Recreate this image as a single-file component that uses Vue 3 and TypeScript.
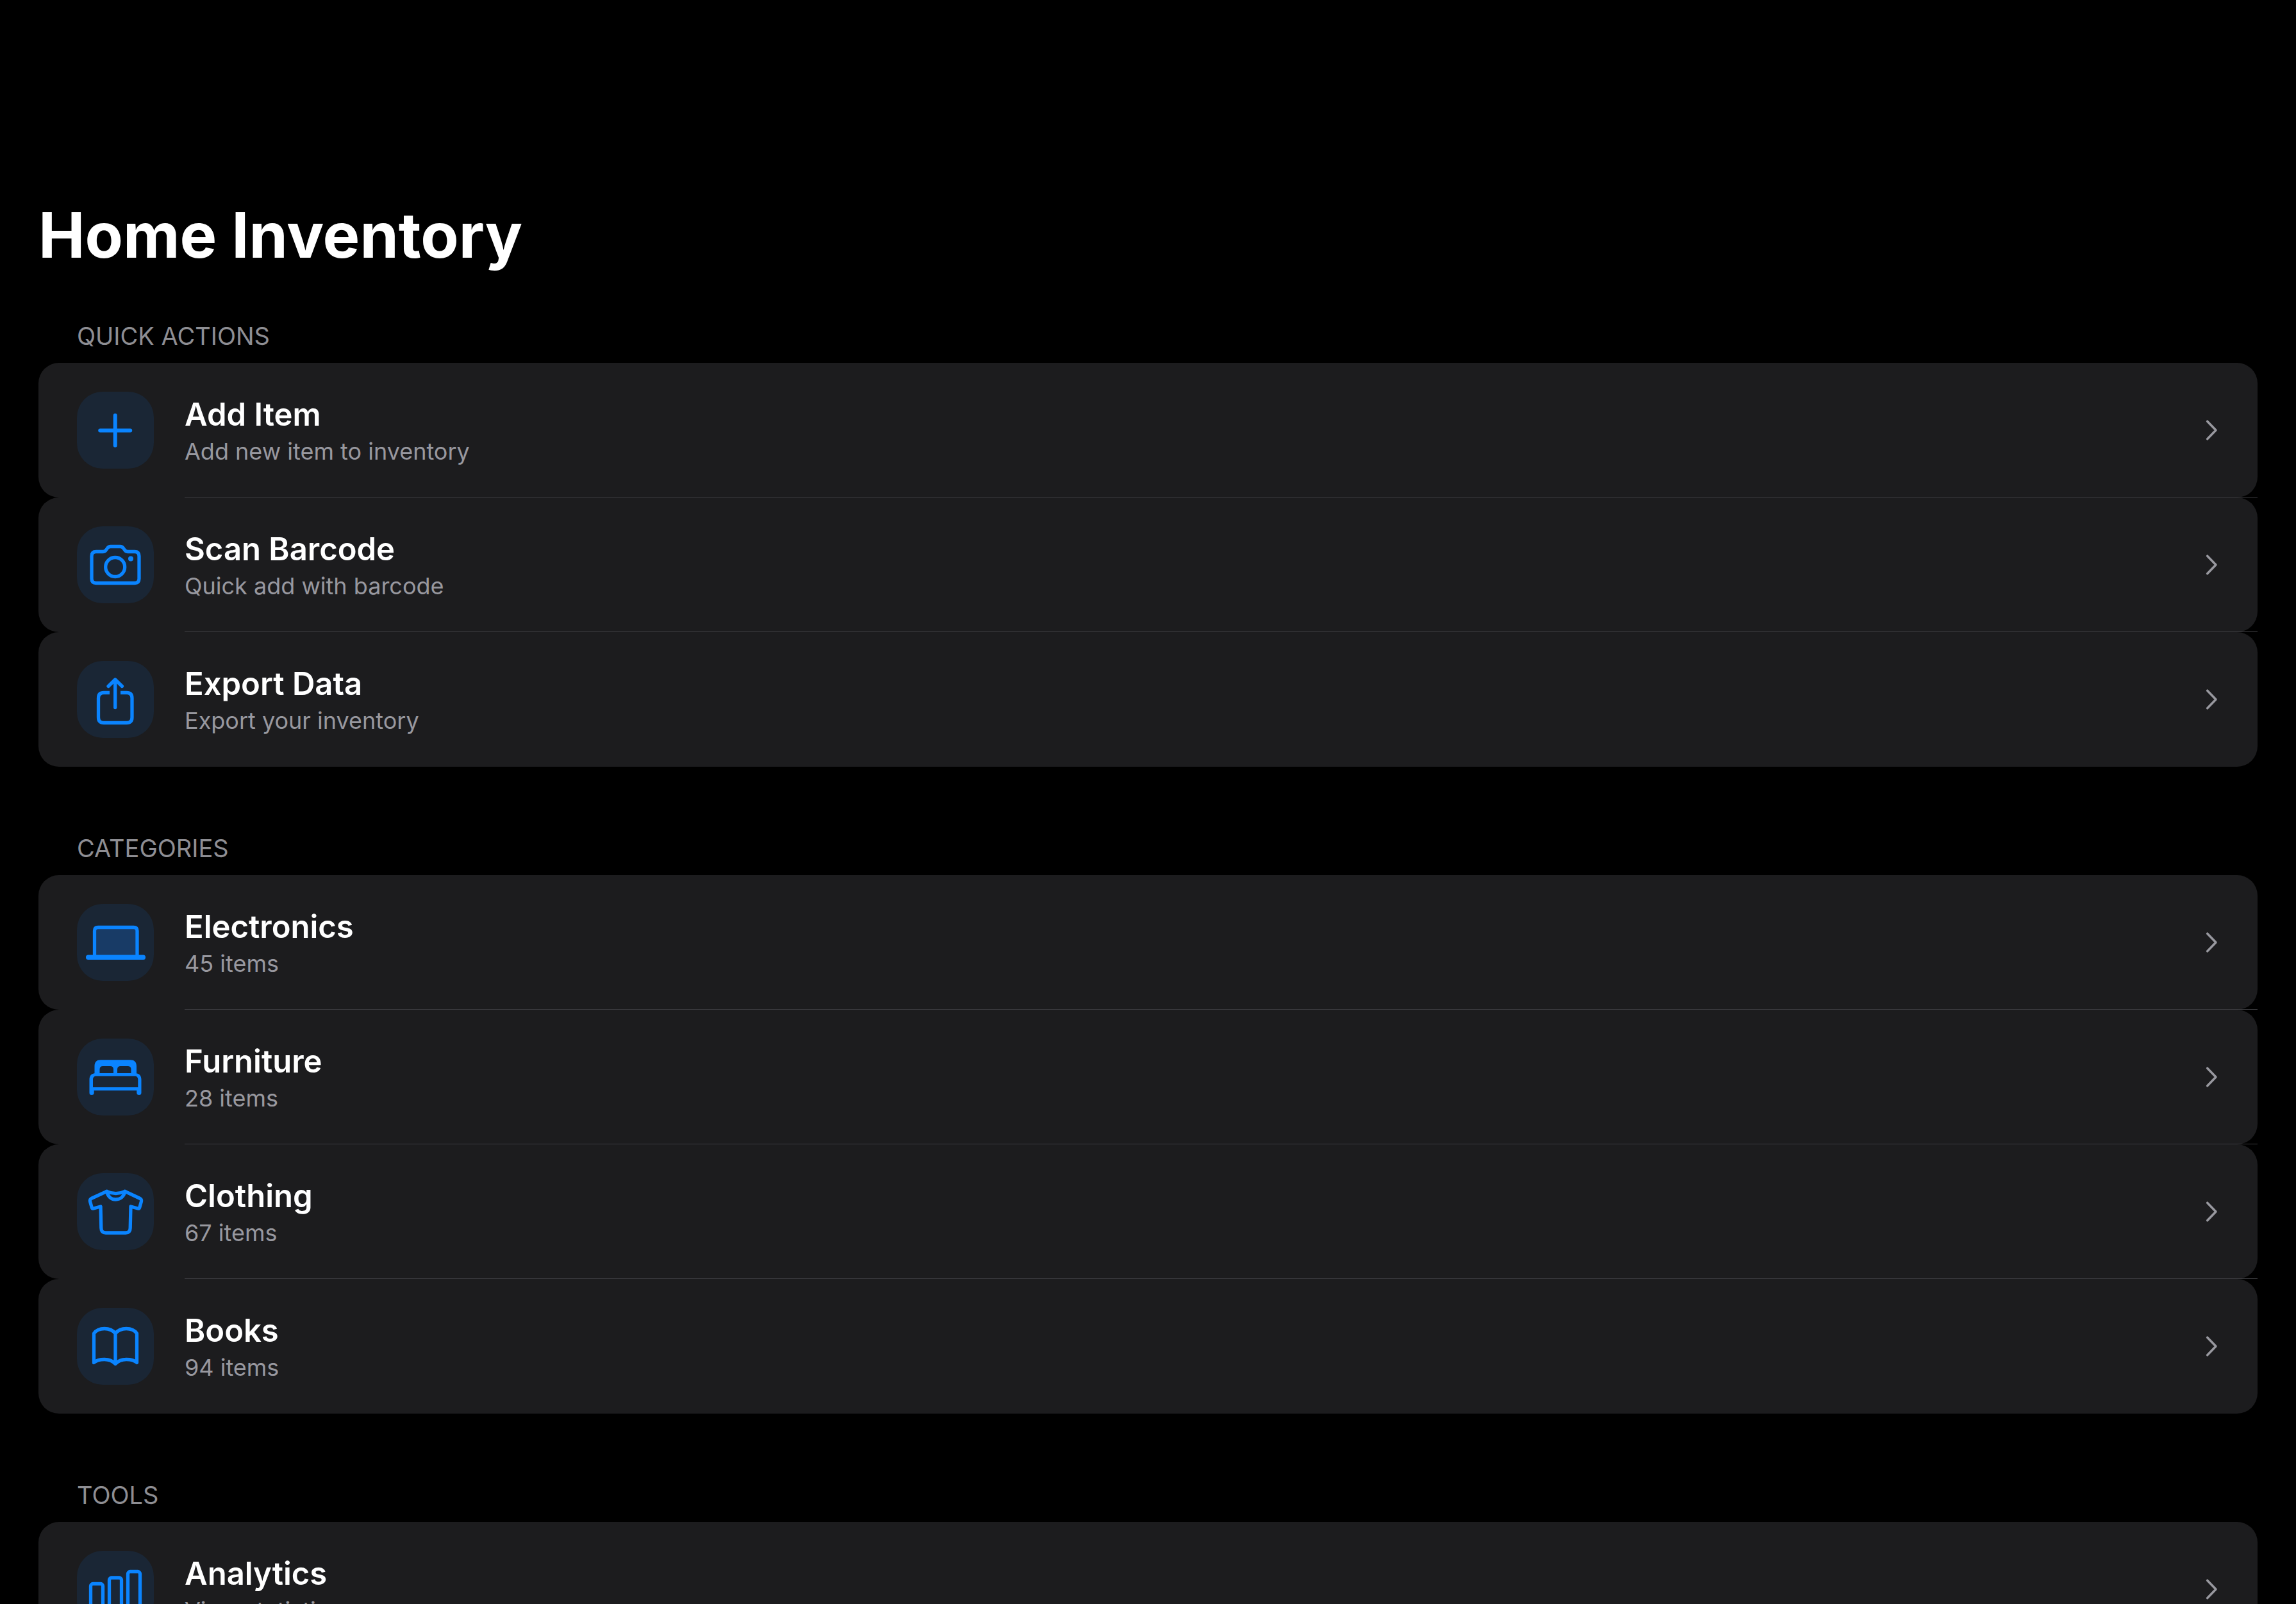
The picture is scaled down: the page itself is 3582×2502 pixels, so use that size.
<script setup lang="ts">
type IconName = 'plus' | 'camera' | 'share' | 'laptop' | 'bed' | 'shirt' | 'book' | 'chart'

interface Row {
  title: string
  subtitle: string
  icon: IconName
}

interface Section {
  id: string
  heading: string
  rows: Row[]
}

const sections: Section[] = [
  {
    id: 'quick-actions',
    heading: 'QUICK ACTIONS',
    rows: [
      { title: 'Add Item', subtitle: 'Add new item to inventory', icon: 'plus' },
      { title: 'Scan Barcode', subtitle: 'Quick add with barcode', icon: 'camera' },
      { title: 'Export Data', subtitle: 'Export your inventory', icon: 'share' },
    ],
  },
  {
    id: 'categories',
    heading: 'CATEGORIES',
    rows: [
      { title: 'Electronics', subtitle: '45 items', icon: 'laptop' },
      { title: 'Furniture', subtitle: '28 items', icon: 'bed' },
      { title: 'Clothing', subtitle: '67 items', icon: 'shirt' },
      { title: 'Books', subtitle: '94 items', icon: 'book' },
    ],
  },
  {
    id: 'tools',
    heading: 'TOOLS',
    rows: [{ title: 'Analytics', subtitle: 'View statistics', icon: 'chart' }],
  },
]
</script>

<template>
  <main class="page">
    <h1 class="page-title">Home Inventory</h1>

    <section v-for="section in sections" :key="section.id" class="section" :aria-labelledby="section.id">
      <h2 :id="section.id" class="section-heading">{{ section.heading }}</h2>
      <ul class="list">
        <li v-for="row in section.rows" :key="row.title" class="item">
          <button type="button" class="row">
            <span class="tile">
              <svg class="glyph" viewBox="0 0 120 120" aria-hidden="true">
                <g v-if="row.icon === 'plus'" class="heavy">
                  <path d="M59.700 37V83.700M36.200 60.400H83.200" />
                </g>
                <g v-else-if="row.icon === 'camera'">
                  <path d="M30 39.500H40.500C42.500 39.500 43.800 39 45 37.500L48 33.500C49.200 32 50.500 31.500 52.500 31.500H67.500C69.500 31.500 70.800 32 72 33.500L75 37.500C76.200 39 77.500 39.500 79.500 39.500H90C94.700 39.500 97 41.800 97 46.500V81.500C97 86.200 94.700 88.500 90 88.500H30C25.300 88.500 23 86.200 23 81.500V46.500C23 41.800 25.300 39.500 30 39.500Z" />
                  <circle cx="59.700" cy="63.500" r="15" />
                  <circle class="solid" cx="84" cy="50.500" r="4" />
                </g>
                <g v-else-if="row.icon === 'share'">
                  <path stroke-linecap="butt" d="M51 49.500H42C36.500 49.500 33.500 52.500 33.500 58V88C33.500 93.500 36.500 96.500 42 96.500H77.500C83 96.500 86 93.500 86 88V58C86 52.500 83 49.500 77.500 49.500H68" />
                  <path d="M59.700 30V72.500M49 39.500L59.700 29L70.500 39.500" />
                </g>
                <g v-else-if="row.icon === 'laptop'">
                  <path class="tint" d="M27.500 80V42C27.500 38.500 29.500 36.500 33 36.500H88.500C92 36.500 94 38.500 94 42V80Z" />
                  <path d="M27.500 80V42C27.500 38.500 29.500 36.500 33 36.500H88.500C92 36.500 94 38.500 94 42V80" />
                  <rect class="solid" x="14" y="79.500" width="93" height="7.500" rx="3.500" />
                </g>
                <g v-else-if="row.icon === 'bed'">
                  <path
                    class="solid"
                    fill-rule="evenodd"
                    d="M27.500 56V43C27.500 36.500 31 33.300 37 33.300H83C89.500 33.300 93 36.500 93 43V56H84.500V48C84.500 44.800 82.500 43 79.500 43H68C65 43 63 44.800 63 48V56H57V48C57 44.800 55 43 52 43H40.500C37.500 43 35.500 44.800 35.500 48V56Z"
                  />
                  <path
                    class="solid"
                    fill-rule="evenodd"
                    d="M29.500 54H90.500C97 54 100.500 57.500 100.500 64V84.500C100.500 87 99.300 88 97 88S93.300 87 93.300 84.500V81H26.700V84.500C26.700 87 25.500 88 23 88S19.500 87 19.500 84.500V64C19.500 57.500 23 54 29.500 54ZM30.500 58.500C27 58.500 25 60.500 25 64V76H95.300V64C95.300 60.500 93.300 58.500 90 58.500Z"
                  />
                </g>
                <g v-else-if="row.icon === 'shirt'">
                  <path d="M46.500 28.300L23.500 39C20.800 40.300 20 41.500 20.500 44L23.200 53.500C23.700 55.200 24.500 55.500 26 55L37 52L37.800 85.500C37.900 90.500 40.200 93 45 93H76C80.800 93 83.100 90.500 83.200 85.500L84 52L95 55C96.500 55.500 97.300 55.200 97.800 53.500L100.500 44C101 41.500 100.200 40.300 97.500 39L75 28.300C66 32.500 55.500 32.500 46.500 28.300Z" />
                  <path d="M46.500 28.300C48 36 53 41 60.500 41S73.500 36 75 28.300" />
                </g>
                <g v-else-if="row.icon === 'book'">
                  <path d="M60 40C56 35 50 32.500 43 32.500S30 35 26.500 40V85.500C30 82 36 80.500 43 80.500S56 83 60 87.500C64 83 70 80.500 77 80.500S90 82 93.500 85.500V40C90 35 84 32.500 77 32.500S64 35 60 40V86" />
                </g>
                <g v-else>
                  <rect x="21.500" y="51.500" width="19" height="38" rx="3.500" />
                  <rect x="50.500" y="42" width="19" height="47.500" rx="3.500" />
                  <rect x="79.500" y="32.500" width="19" height="57" rx="3.500" />
                </g>
              </svg>
            </span>
            <span class="copy">
              <span class="title">{{ row.title }}</span>
              <span class="subtitle">{{ row.subtitle }}</span>
            </span>
            <svg class="chevron" viewBox="0 0 22 36" aria-hidden="true">
              <path d="M3.700 4.200L17 18L3.700 31.800" />
            </svg>
          </button>
        </li>
      </ul>
    </section>
  </main>
</template>

<style>
html {
  background: #000;
  scrollbar-width: none;
}

body {
  margin: 0;
}
</style>

<style scoped>
.page {
  padding: 307px 60px 0;
  background: #000;
  color: #fff;
  font-family: Inter, 'Liberation Sans', sans-serif;
}

.page-title {
  margin: 0 0 54px;
  font-size: 97px;
  font-weight: 700;
  line-height: 120px;
}

.section {
  margin-bottom: 84px;
}

.section-heading {
  margin: 0;
  padding: 19px 60px 18px;
  color: #8e8e93;
  font-size: 38px;
  font-weight: 400;
  line-height: 48px;
}

.list {
  margin: 0;
  padding: 0;
  list-style: none;
}

.item {
  position: relative;
}

.item:not(:last-child)::after {
  content: '';
  position: absolute;
  right: 0;
  bottom: 0;
  left: 228px;
  height: 1px;
  background: #3d3d41;
}

.row {
  display: flex;
  align-items: center;
  gap: 48px;
  box-sizing: border-box;
  width: 100%;
  padding: 45px 60px;
  border: 0;
  border-radius: 32px;
  background: #1c1c1e;
  color: inherit;
  font: inherit;
  text-align: left;
  cursor: pointer;
}

.tile {
  flex: none;
  width: 120px;
  height: 120px;
  border-radius: 40px;
  background: #1a2635;
}

.glyph {
  display: block;
  width: 100%;
  height: 100%;
  fill: none;
  stroke: #0a84ff;
  stroke-width: 5.3;
  stroke-linecap: round;
  stroke-linejoin: round;
}

.heavy {
  stroke-width: 6;
}

.solid {
  fill: #0a84ff;
  stroke: none;
}

.tint {
  fill: #183b66;
  stroke: none;
}

.copy {
  display: flex;
  flex: 1;
  flex-direction: column;
  gap: 2px;
}

.title {
  font-size: 49px;
  font-weight: 600;
  line-height: 64px;
}

.subtitle {
  color: #98989f;
  font-size: 36px;
  line-height: 46px;
}

.chevron {
  flex: none;
  width: 22px;
  height: 36px;
  fill: none;
  stroke: #98989f;
  stroke-width: 3.5;
  stroke-linecap: round;
  stroke-linejoin: round;
}
</style>
